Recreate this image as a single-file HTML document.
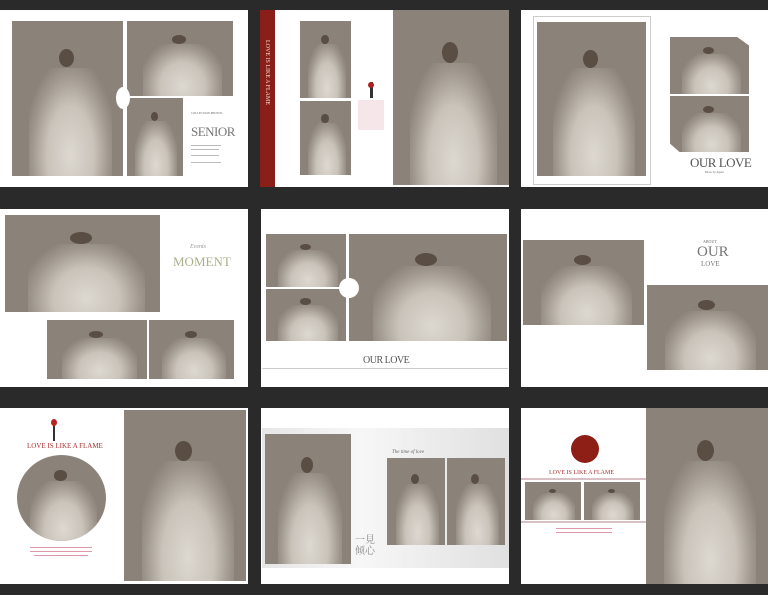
<!DOCTYPE html>
<html><head><meta charset="utf-8"><style>
*{margin:0;padding:0;box-sizing:border-box}
body{width:768px;height:595px;background:#2a2a2a;position:relative;overflow:hidden;font-family:"Liberation Serif","Noto Serif CJK SC",serif}
.a{position:absolute}
.pn{position:absolute;background:#fff}
.ph{position:absolute;background:#8b8379;overflow:hidden}
.ph::after{content:"";position:absolute;left:15%;right:10%;top:30%;bottom:-5%;background:radial-gradient(ellipse at 50% 75%,#ddd8d0 0%,#c9c3ba 40%,rgba(180,173,164,0.5) 65%,rgba(139,131,121,0) 80%)}
.ph::before{content:"";position:absolute;left:42%;top:18%;width:14%;height:12%;border-radius:50%;background:#5a4e44;z-index:1}
.t{position:absolute;white-space:nowrap;color:#666;line-height:1}
.circ{position:absolute;background:#fff;border-radius:50%}
.tiny{position:absolute;background:#bbb;height:1px}
</style></head><body>

<!-- Row 1 -->
<div class="pn" style="left:0;top:10px;width:248px;height:177px"></div>
<div class="ph" style="left:12px;top:21px;width:111px;height:155px"></div>
<div class="ph" style="left:127px;top:21px;width:106px;height:75px"></div>
<div class="ph" style="left:127px;top:98px;width:56px;height:78px"></div>
<div class="circ" style="left:116px;top:87px;width:14px;height:22px"></div>
<div class="t" style="left:191px;top:112px;font-size:3px">COLLECTION PHOTOS</div>
<div class="t" style="left:191px;top:125px;font-size:13px;color:#777;letter-spacing:-0.5px">SENIOR</div>
<div class="tiny" style="left:191px;top:145px;width:30px"></div>
<div class="tiny" style="left:191px;top:149px;width:28px"></div>
<div class="tiny" style="left:191px;top:155px;width:28px"></div>
<div class="tiny" style="left:191px;top:162px;width:30px"></div>

<div class="pn" style="left:260px;top:10px;width:249px;height:177px"></div>
<div class="a" style="left:260px;top:10px;width:15px;height:177px;background:#8a1f1a"></div>
<div class="t" style="left:264px;top:40px;font-size:6px;color:#f0d8d0;writing-mode:vertical-rl">LOVE IS LIKE A FLAME</div>
<div class="ph" style="left:300px;top:21px;width:51px;height:77px"></div>
<div class="ph" style="left:300px;top:101px;width:51px;height:74px"></div>
<div class="a" style="left:370px;top:82px;width:3px;height:16px;background:#333"></div>
<div class="a" style="left:368px;top:82px;width:6px;height:6px;border-radius:50%;background:#a22"></div>
<div class="a" style="left:358px;top:100px;width:26px;height:30px;background:#f6e6ea"></div>
<div class="ph" style="left:393px;top:10px;width:116px;height:175px"></div>

<div class="pn" style="left:521px;top:10px;width:247px;height:177px"></div>
<div class="a" style="left:533px;top:16px;width:118px;height:169px;border:1px solid #ccc"></div>
<div class="ph" style="left:537px;top:22px;width:109px;height:154px"></div>
<div class="ph" style="left:670px;top:37px;width:79px;height:57px;clip-path:polygon(0 0,85% 0,100% 15%,100% 100%,0 100%)"></div>
<div class="ph" style="left:670px;top:96px;width:79px;height:56px;clip-path:polygon(0 0,100% 0,100% 100%,12% 100%,0 85%)"></div>
<div class="t" style="left:690px;top:156px;font-size:13px;color:#555;letter-spacing:-0.5px">OUR LOVE</div>
<div class="t" style="left:705px;top:171px;font-size:3px">Photo by Agent</div>

<!-- Row 2 -->
<div class="pn" style="left:0;top:209px;width:248px;height:178px"></div>
<div class="ph" style="left:5px;top:215px;width:155px;height:97px"></div>
<div class="ph" style="left:47px;top:320px;width:100px;height:59px"></div>
<div class="ph" style="left:149px;top:320px;width:85px;height:59px"></div>
<div class="t" style="left:173px;top:255px;font-size:13px;color:#a8b08a">MOMENT</div>
<div class="t" style="left:190px;top:244px;font-size:6px;color:#999;font-style:italic">Events</div>

<div class="pn" style="left:261px;top:209px;width:248px;height:178px"></div>
<div class="ph" style="left:266px;top:234px;width:80px;height:53px"></div>
<div class="ph" style="left:266px;top:289px;width:80px;height:52px"></div>
<div class="ph" style="left:349px;top:234px;width:158px;height:107px"></div>
<div class="circ" style="left:339px;top:278px;width:20px;height:20px"></div>
<div class="t" style="left:363px;top:356px;font-size:10px;color:#555;letter-spacing:-0.5px">OUR LOVE</div>
<div class="a" style="left:262px;top:368px;width:246px;height:1px;background:#ccc"></div>

<div class="pn" style="left:521px;top:209px;width:247px;height:178px"></div>
<div class="ph" style="left:523px;top:240px;width:121px;height:85px"></div>
<div class="ph" style="left:647px;top:285px;width:121px;height:85px"></div>
<div class="t" style="left:703px;top:240px;font-size:4px">ABOUT</div>
<div class="t" style="left:697px;top:245px;font-size:15px;color:#777">OUR</div>
<div class="t" style="left:701px;top:261px;font-size:7px;color:#777">LOVE</div>

<!-- Row 3 -->
<div class="pn" style="left:0;top:408px;width:248px;height:176px"></div>
<div class="ph" style="left:124px;top:410px;width:122px;height:171px"></div>
<div class="ph" style="left:17px;top:455px;width:89px;height:86px;border-radius:50%"></div>
<div class="a" style="left:53px;top:421px;width:2px;height:20px;background:#333"></div>
<div class="a" style="left:51px;top:419px;width:6px;height:7px;border-radius:50%;background:#b22"></div>
<div class="t" style="left:27px;top:443px;font-size:7px;color:#a33">LOVE IS LIKE A FLAME</div>
<div class="tiny" style="left:30px;top:547px;width:62px;background:#d9a"></div>
<div class="tiny" style="left:30px;top:551px;width:62px;background:#d9a"></div>
<div class="tiny" style="left:34px;top:555px;width:54px;background:#d9a"></div>

<div class="pn" style="left:261px;top:408px;width:248px;height:176px"></div>
<div class="a" style="left:262px;top:428px;width:247px;height:140px;background:linear-gradient(90deg,#e6e6e6,#f7f7f7 40%,#e0e0e0)"></div>
<div class="ph" style="left:265px;top:434px;width:86px;height:130px"></div>
<div class="ph" style="left:387px;top:458px;width:58px;height:87px"></div>
<div class="ph" style="left:447px;top:458px;width:58px;height:87px"></div>
<div class="t" style="left:392px;top:450px;font-size:5px;font-style:italic">The time of love</div>
<div class="t" style="left:355px;top:535px;font-size:10px;color:#888;line-height:1.1">一見<br>倾心</div>

<div class="pn" style="left:521px;top:408px;width:247px;height:176px"></div>
<div class="ph" style="left:646px;top:408px;width:122px;height:176px"></div>
<div class="a" style="left:571px;top:435px;width:28px;height:28px;border-radius:50%;background:#8e1f17"></div>
<div class="t" style="left:549px;top:470px;font-size:6px;color:#a33">LOVE IS LIKE A FLAME</div>
<div class="a" style="left:521px;top:478px;width:125px;height:45px;background:#fff;border-top:2px solid #d8c0c4;border-bottom:2px solid #d8c0c4"></div>
<div class="ph" style="left:525px;top:482px;width:56px;height:38px"></div>
<div class="ph" style="left:584px;top:482px;width:56px;height:38px"></div>
<div class="tiny" style="left:556px;top:528px;width:56px;background:#d9a"></div>
<div class="tiny" style="left:556px;top:532px;width:56px;background:#d9a"></div>

</body></html>
